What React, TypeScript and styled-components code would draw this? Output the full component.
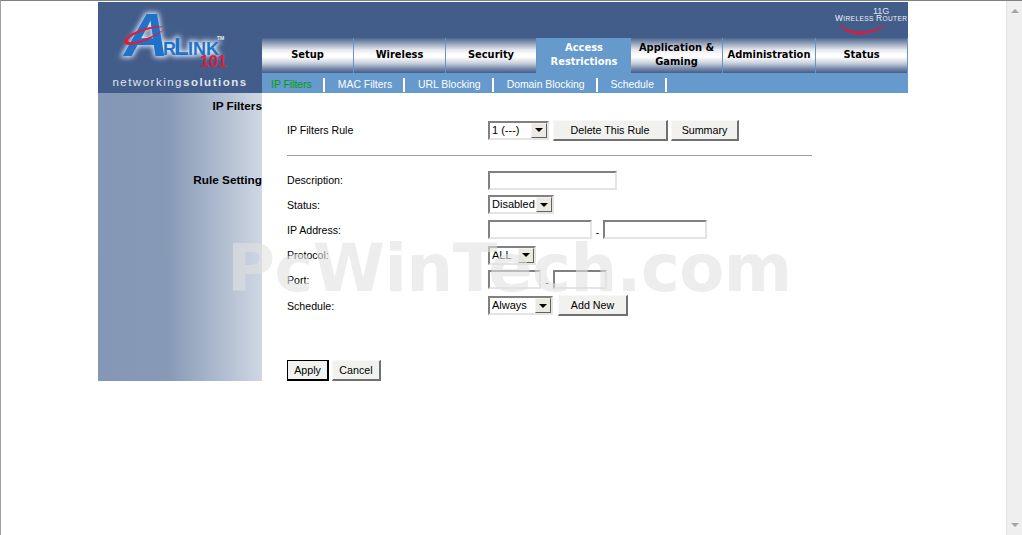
import React from 'react'
import styled, { createGlobalStyle } from 'styled-components'

const GlobalStyle = createGlobalStyle`
  html, body {
    margin: 0;
    padding: 0;
    height: 100%;
    overflow: hidden;
    background: #fff;
  }
  #root {
    height: 100%;
  }
`

const Window = styled.div`
  position: relative;
  display: flex;
  width: 1022px;
  height: 535px;
  box-sizing: border-box;
  border-top: 1px solid #808080;
  border-left: 1px solid #a0a0a0;
  background: #fff;
  font-family: 'Liberation Sans', Arial, sans-serif;
  font-size: 10.6px;
  color: #000;
  overflow: hidden;
`

const Viewport = styled.div`
  flex: 1;
  padding: 1px 0 0 97px;
`

const Scrollbar = styled.div`
  width: 16px;
  display: flex;
  flex-direction: column;
  justify-content: space-between;
  align-items: center;
  padding: 8px 0;
  box-sizing: border-box;
  background: #efefef;
  border-left: 1px solid #e4e4e4;
`

const Arrow = styled.span<{ $down?: boolean }>`
  width: 0;
  height: 0;
  border-left: 4px solid transparent;
  border-right: 4px solid transparent;
  ${props =>
    props.$down
      ? 'border-top: 4px solid #a3a3a3;'
      : 'border-bottom: 4px solid #a3a3a3;'}
`

const Page = styled.div`
  width: 810px;
  display: grid;
  grid-template-columns: 164px 1fr;
  grid-template-rows: 91px 288px;
`

const LogoPanel = styled.div`
  background: #435d8a;
  display: flex;
  flex-direction: column;
`

const LogoArt = styled.svg`
  display: block;
`

const Tagline = styled.div`
  height: 20px;
  line-height: 18px;
  text-align: center;
  color: #dfe4ee;
  font-size: 11.5px;
  letter-spacing: 1.5px;
  white-space: nowrap;
  b {
    font-weight: bold;
  }
`

const NavPanel = styled.div`
  background: #435d8a;
  display: flex;
  flex-direction: column;
`

const Brand = styled.div`
  height: 36px;
  display: flex;
  justify-content: flex-end;
`

const Tabs = styled.div`
  height: 35px;
  display: flex;
`

const Tab = styled.div<{ $width: number; $active?: boolean }>`
  width: ${props => props.$width}px;
  flex: none;
  box-sizing: border-box;
  display: flex;
  align-items: center;
  justify-content: center;
  padding-bottom: 1px;
  text-align: center;
  white-space: pre-line;
  font-family: 'DejaVu Sans', Verdana, sans-serif;
  font-weight: bold;
  font-size: 9.9px;
  line-height: 14px;
  color: ${props => (props.$active ? '#fff' : '#000')};
  border-right: ${props => (props.$active ? 'none' : '1px solid #6a94c4')};
  background: ${props =>
    props.$active
      ? '#6699cc'
      : `linear-gradient(
          #4d668f 0%,
          #8b9bb5 14%,
          #e6e9ef 34%,
          #ffffff 48%,
          #ffffff 54%,
          #c9d0dc 72%,
          #7e90ae 86%,
          #435d8a 100%
        )`};
`

const SubNav = styled.div`
  height: 20px;
  box-sizing: border-box;
  background: #6699cc;
  display: flex;
  align-items: center;
  padding: 4px 0 0 9px;
  font-size: 10.4px;
`

const SubLink = styled.span<{ $active?: boolean }>`
  color: ${props => (props.$active ? '#00a000' : '#fff')};
  line-height: 14px;
  padding-right: 11px;
  margin-right: 13px;
  border-right: 2px solid #fff;
  white-space: nowrap;
`

const Sidebar = styled.div`
  background: linear-gradient(
    90deg,
    #8497b5 0%,
    #8699b6 42%,
    #a9b7cc 70%,
    #cfd7e3 100%
  );
  display: flex;
  flex-direction: column;
  align-items: flex-end;
  font-size: 11.8px;
  font-weight: bold;
  padding-top: 6px;
  line-height: 14px;
  box-sizing: border-box;
`

const SideHeading = styled.div<{ $top?: number }>`
  margin-top: ${props => props.$top ?? 0}px;
`

const Content = styled.div`
  padding: 25px 0 0 25px;
  display: flex;
  flex-direction: column;
`

const Row = styled.div<{ $top?: number }>`
  height: 25px;
  margin-top: ${props => props.$top ?? 0}px;
  display: grid;
  grid-template-columns: 201px 1fr;
  align-items: center;
`

const Controls = styled.div`
  display: flex;
  align-items: center;
  gap: 3px;
`

const Divider = styled.hr`
  width: 525px;
  height: 1px;
  margin: 12px 0 12px;
  border: 0;
  background: #a0a0a0;
`

const TextBox = styled.div<{ $width: number }>`
  width: ${props => props.$width}px;
  height: 19px;
  box-sizing: border-box;
  background: #fff;
  border: 2px solid;
  border-color: #808080 #e4e4e4 #e4e4e4 #808080;
`

const Dash = styled.span<{ $width: number }>`
  width: ${props => props.$width}px;
  text-align: center;
  padding-top: 4px;
`

const SelectBox = styled.div<{ $width: number }>`
  width: ${props => props.$width}px;
  height: 19px;
  box-sizing: border-box;
  display: flex;
  align-items: center;
  justify-content: space-between;
  background: #fff;
  border: 2px solid;
  border-color: #808080 #e4e4e4 #e4e4e4 #808080;
  padding-left: 2px;
  font-size: 11px;
  line-height: 15px;
  white-space: nowrap;
`

const SelectArrow = styled.span`
  width: 16px;
  height: 15px;
  flex: none;
  box-sizing: border-box;
  display: flex;
  align-items: center;
  justify-content: center;
  background: #ece9e2;
  border: 1px solid;
  border-color: #f4f4f4 #606060 #606060 #f4f4f4;
  &::after {
    content: '';
    width: 0;
    height: 0;
    border-left: 4px solid transparent;
    border-right: 4px solid transparent;
    border-top: 4px solid #000;
  }
`

const Button = styled.button<{ $width: number; $primary?: boolean; $left?: number }>`
  width: ${props => props.$width}px;
  height: 21px;
  margin: 0 0 0 ${props => props.$left ?? 0}px;
  padding: 0;
  box-sizing: border-box;
  background: #f1f1ef;
  font-family: inherit;
  font-size: 10.7px;
  color: #000;
  border-style: solid;
  border-width: 1px 2px 2px 1px;
  border-color: ${props =>
    props.$primary ? '#000' : '#f8f8f8 #707070 #707070 #f8f8f8'};
`

const ActionRow = styled.div`
  margin-top: 42px;
  display: flex;
  gap: 3px;
`

const Watermark = styled.div`
  position: absolute;
  left: 226px;
  top: 232px;
  font-family: 'DejaVu Sans', Verdana, sans-serif;
  font-weight: bold;
  font-size: 65.5px;
  line-height: 70px;
  letter-spacing: -0.5px;
  color: rgba(225, 225, 225, 0.6);
  white-space: nowrap;
  pointer-events: none;
`

const LOGO_FONT = "'Liberation Sans', sans-serif"

function LogoLetters({ fill }: { fill: string }) {
  return (
    <g fill={fill} fontFamily={LOGO_FONT} fontWeight="bold">
      <text x="26" y="54" fontStyle="italic" fontSize="62">A</text>
      <text x="60" y="53" fontSize="18">IR</text>
      <text x="76" y="53" fontSize="24">L</text>
      <text x="90" y="53" fontSize="18">INK</text>
    </g>
  )
}

function AirLinkLogo() {
  return (
    <LogoArt width={164} height={71} viewBox="0 0 164 71">
      <defs>
        <filter id="glow" x="-20%" y="-20%" width="140%" height="140%">
          <feGaussianBlur stdDeviation="2.4" />
        </filter>
      </defs>
      <g filter="url(#glow)" stroke="#dce8f8" strokeWidth="3">
        <LogoLetters fill="#dce8f8" />
      </g>
      <LogoLetters fill="#1f72c8" />
      <path
        d="M67 25 C52 21 25 33 26 40 C27 47 50 41 67 27 C50 37 32 43 30 39 C29 34 52 25 67 25 Z"
        fill="#d8203c"
      />
      <text x="119" y="38" fontFamily={LOGO_FONT} fontWeight="bold" fontSize="5" fill="#e8eef6">TM</text>
      <text x="102" y="65" fontFamily={LOGO_FONT} fontWeight="bold" fontSize="16" fill="#d8203c">101</text>
    </LogoArt>
  )
}

function WirelessBadge() {
  return (
    <svg width={76} height={36} viewBox="0 0 76 36">
      <text x="41" y="12" fontFamily={LOGO_FONT} fontSize="9" fill="#dfe5ee">11G</text>
      <text x="3" y="19" fontFamily={LOGO_FONT} fontSize="6.6" fill="#eef1f6" textLength="72" lengthAdjust="spacing">
        <tspan fontSize="8.4">W</tspan>IRELESS <tspan fontSize="8.4">R</tspan>OUTER
      </text>
      <path d="M6 21 C14 31 36 33 55 22 C40 35 14 37 6 21 Z" fill="#d01f45" />
    </svg>
  )
}

function Select({ width, value }: { width: number; value: string }) {
  return (
    <SelectBox $width={width}>
      {value}
      <SelectArrow />
    </SelectBox>
  )
}

const TABS = [
  { label: 'Setup', width: 92 },
  { label: 'Wireless', width: 92 },
  { label: 'Security', width: 91 },
  { label: 'Access\nRestrictions', width: 94, active: true },
  { label: 'Application &\nGaming', width: 92 },
  { label: 'Administration', width: 93 },
  { label: 'Status', width: 92 },
]

const SUB_LINKS = [
  { label: 'IP Filters', active: true },
  { label: 'MAC Filters' },
  { label: 'URL Blocking' },
  { label: 'Domain Blocking' },
  { label: 'Schedule' },
]

export default function App() {
  return (
    <Window>
      <GlobalStyle />
      <Viewport>
        <Page>
          <LogoPanel>
            <AirLinkLogo />
            <Tagline>
              networking<b>solutions</b>
            </Tagline>
          </LogoPanel>
          <NavPanel>
            <Brand>
              <WirelessBadge />
            </Brand>
            <Tabs>
              {TABS.map(tab => (
                <Tab key={tab.label} $width={tab.width} $active={tab.active}>
                  {tab.label}
                </Tab>
              ))}
            </Tabs>
            <SubNav>
              {SUB_LINKS.map(link => (
                <SubLink key={link.label} $active={link.active}>
                  {link.label}
                </SubLink>
              ))}
            </SubNav>
          </NavPanel>
          <Sidebar>
            <SideHeading>IP Filters</SideHeading>
            <SideHeading $top={60}>Rule Setting</SideHeading>
          </Sidebar>
          <Content>
            <Row>
              <span>IP Filters Rule</span>
              <Controls>
                <Select width={61} value="1 (---)" />
                <Button $width={115} $left={1}>Delete This Rule</Button>
                <Button $width={68}>Summary</Button>
              </Controls>
            </Row>
            <Divider />
            <Row>
              <span>Description:</span>
              <Controls>
                <TextBox $width={129} />
              </Controls>
            </Row>
            <Row>
              <span>Status:</span>
              <Controls>
                <Select width={66} value="Disabled" />
              </Controls>
            </Row>
            <Row>
              <span>IP Address:</span>
              <Controls>
                <TextBox $width={104} />
                <Dash $width={5}>-</Dash>
                <TextBox $width={104} />
              </Controls>
            </Row>
            <Row $top={1}>
              <span>Protocol:</span>
              <Controls>
                <Select width={48} value="ALL" />
              </Controls>
            </Row>
            <Row>
              <span>Port:</span>
              <Controls>
                <TextBox $width={53} />
                <Dash $width={6}>-</Dash>
                <TextBox $width={54} />
              </Controls>
            </Row>
            <Row $top={1}>
              <span>Schedule:</span>
              <Controls>
                <Select width={65} value="Always" />
                <Button $width={70} $left={2}>Add New</Button>
              </Controls>
            </Row>
            <ActionRow>
              <Button $width={42} $primary>Apply</Button>
              <Button $width={49}>Cancel</Button>
            </ActionRow>
          </Content>
        </Page>
      </Viewport>
      <Scrollbar>
        <Arrow />
        <Arrow $down />
      </Scrollbar>
      <Watermark>PcWinTech.com</Watermark>
    </Window>
  )
}
